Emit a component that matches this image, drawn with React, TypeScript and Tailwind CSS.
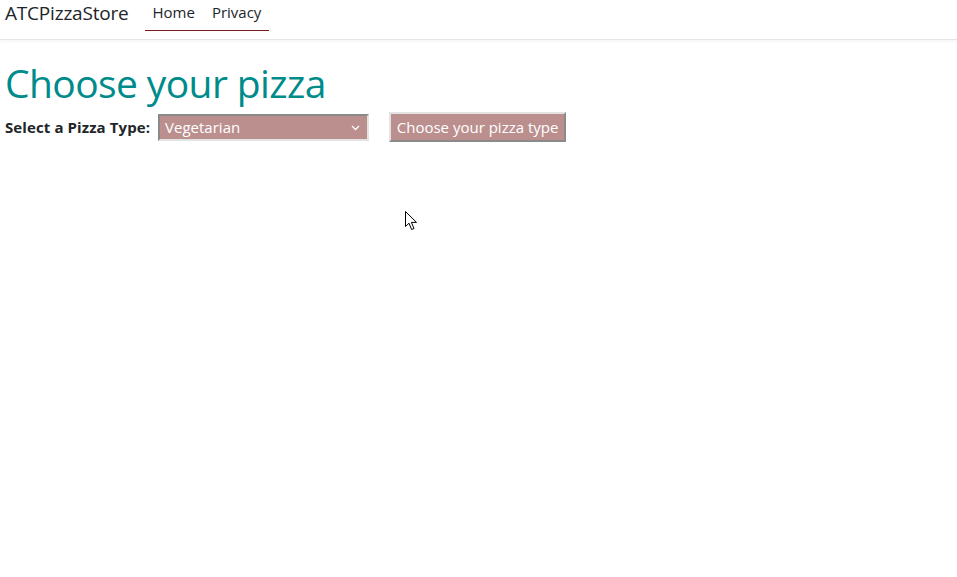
export default function App() {
  return (
    <div className="relative min-h-[577px] bg-white text-[#212529]" style={{ fontFamily: '"Open Sans", "Noto Sans", sans-serif' }}>
      {/* Navbar */}
      <nav className="flex h-[40px] items-start border-b border-[#e5e5e5] shadow-[0_1px_4px_rgba(0,0,0,0.06)]">
        <span className="ml-[5px] mt-[1px] text-[19px] leading-[24px] tracking-[-0.2px] text-[#212529]">ATCPizzaStore</span>
        <div className="ml-[16px] flex h-[31px] items-start border-b border-[#7a1a1a] px-[8px]">
          <a className="mt-[2px] text-[15px] leading-[20px] text-[#212529]">Home</a>
          <a className="ml-[17px] mt-[2px] text-[15px] leading-[20px] text-[#212529]">Privacy</a>
        </div>
      </nav>

      {/* Main */}
      <main className="px-[5px]">
        <h1 className="mt-[19px] text-[39px] leading-[48px] tracking-[-0.6px] text-[#008b8b]">Choose your pizza</h1>
        <div className="mt-[5px] flex items-center">
          <label className="text-[15px] font-bold tracking-[0.1px] text-[#212529]">Select a Pizza Type:</label>
          <div className="relative ml-[8px] flex h-[27px] w-[211px] items-center border-2 border-t-[#8a8a8a] border-l-[#8a8a8a] border-b-[#e3e3e3] border-r-[#e3e3e3] bg-[#bc8f8f] pl-[5px] text-[15px] text-white">
            Vegetarian
            <svg className="absolute right-[7px] top-[9px]" width="9" height="6" viewBox="0 0 9 6" fill="none" stroke="white" strokeWidth="1.3">
              <path d="M1 1l3.5 3.5L8 1" />
            </svg>
          </div>
          <button className="ml-[20px] h-[30px] w-[177px] border-2 border-t-[#e3e3e3] border-l-[#e3e3e3] border-b-[#8a8a8a] border-r-[#8a8a8a] bg-[#bc8f8f] text-[15px] text-white">
            Choose your pizza type
          </button>
        </div>
      </main>

      {/* Mouse cursor */}
      <svg className="absolute left-[405px] top-[211px]" width="13" height="20" viewBox="0 0 13 20">
        <path d="M0.5 0.5 L0.5 15.5 L4 12.2 L6.6 18.5 L9 17.5 L6.4 11.4 L11.5 11.4 Z" fill="white" stroke="black" strokeWidth="1" strokeLinejoin="miter" />
      </svg>
    </div>
  );
}
